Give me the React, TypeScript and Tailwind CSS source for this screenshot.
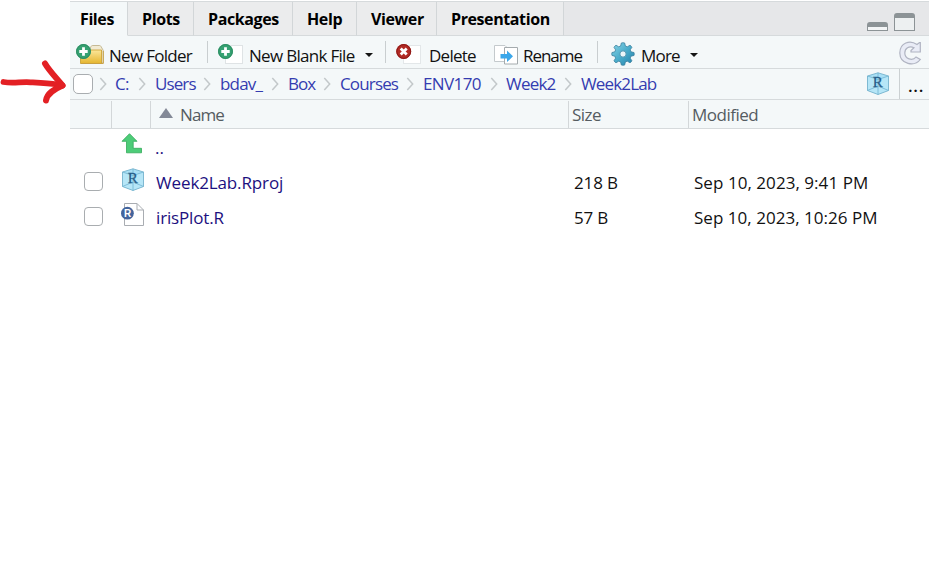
import type { ReactNode } from "react";

const tabs = [
  { name: "Files", box: "w-[58px] pl-[10px] bg-[#f4f8f9] border-b-[#f4f8f9]" },
  { name: "Plots", box: "w-[66px] pl-[14px] bg-[#ebeced] border-b-[#d6dadc]" },
  { name: "Packages", box: "w-[99px] pl-[14px] bg-[#ebeced] border-b-[#d6dadc]" },
  { name: "Help", box: "w-[64px] pl-[14px] bg-[#ebeced] border-b-[#d6dadc]" },
  { name: "Viewer", box: "w-[80px] pl-[14px] bg-[#ebeced] border-b-[#d6dadc]" },
  { name: "Presentation", box: "w-[127px] pl-[14px] bg-[#ebeced] border-b-[#d6dadc]" },
];

const crumbs = [
  { name: "C:", box: "w-[39px]", text: "tracking-[-0.6px]" },
  { name: "Users", box: "w-[65px]", text: "pl-px tracking-[-0.9px]" },
  { name: "bdav_", box: "w-[68px]", text: "pl-px tracking-[-0.8px]" },
  { name: "Box", box: "w-[52px]", text: "pl-px tracking-[-1px]" },
  { name: "Courses", box: "w-[83px]", text: "pl-px tracking-[-0.85px]" },
  { name: "ENV170", box: "w-[84px]", text: "pl-px tracking-[-0.6px]" },
  { name: "Week2", box: "w-[74px]", text: "tracking-[-0.8px]" },
  { name: "Week2Lab", box: "w-[100px]", text: "pl-px tracking-[-0.85px]" },
];

function Chevron() {
  return (
    <svg className="h-[14px] w-[9px] shrink-0" viewBox="0 0 9 14" fill="none" stroke="#c3c8ca" strokeWidth="1.5">
      <path d="M1.300 1l5.400 6-5.400 6" />
    </svg>
  );
}

function Plus() {
  return (
    <g>
      <circle cx="7.5" cy="7.5" r="7.4" fill="#35a172" />
      <circle cx="7.5" cy="7.5" r="6.9" fill="none" stroke="#2b8c60" strokeWidth="1" />
      <path d="M7.500 3.300v8.400M3.300 7.500h8.400" stroke="#fff" strokeWidth="2.800" />
    </g>
  );
}

function FolderIcon() {
  return (
    <svg className="h-[22px] w-[28px]" viewBox="0 0 28 22">
      <defs>
        <linearGradient id="folder" x2="0" y2="1">
          <stop stopColor="#fbe79b" />
          <stop offset="1" stopColor="#e5b52e" />
        </linearGradient>
      </defs>
      <path d="M13 7l2-4.500q.5-1 1.500-1h7q1 0 1.500 1l2.300 4V19H13z" fill="#f1ead2" stroke="#b9ab80" strokeWidth=".8" />
      <path d="M4.500 8.500h8.500l2-2.500h10.500v13.500h-21z" fill="url(#folder)" stroke="#c99c28" strokeWidth=".8" />
      <path d="M27.300 7v12.500H5" fill="none" stroke="#c79f42" strokeWidth=".9" />
      <Plus />
    </svg>
  );
}

function BlankFileIcon() {
  return (
    <svg className="h-[22px] w-[26px]" viewBox="0 0 26 22">
      <rect x="7.500" y="1.500" width="17" height="18" fill="#fff" stroke="#dfe3e5" />
      <Plus />
    </svg>
  );
}

function DeleteIcon() {
  return (
    <svg className="h-[22px] w-[26px]" viewBox="0 0 26 22">
      <rect x="7.500" y="1.500" width="17" height="18" fill="#fff" stroke="#e3e7e9" />
      <circle cx="7.700" cy="7.500" r="7.500" fill="#b12a24" />
      <circle cx="7.700" cy="7.500" r="6.900" fill="none" stroke="#8c1715" />
      <path d="M4.700 4.500l6 6M10.700 4.500l-6 6" stroke="#fff" strokeWidth="2.800" />
    </svg>
  );
}

function RenameIcon() {
  return (
    <svg className="h-[22px] w-[25px]" viewBox="0 0 25 22">
      <path d="M.5 1.500h10.500l3 3v13H.5z" fill="#fff" stroke="#c4cacd" />
      <path d="M10.500 3.500h13v16.500h-13z" fill="#fff" stroke="#a4abae" />
      <path d="M6.500 10H13V6.500l6 5.800-6 5.800v-3.600H6.500z" fill="#3ba7ea" />
    </svg>
  );
}

function GearIcon() {
  return (
    <svg className="h-[24px] w-[24px]" viewBox="0 0 25 25">
      <defs>
        <linearGradient id="gear" x2="1" y2="1">
          <stop stopColor="#8ad4e6" />
          <stop offset=".5" stopColor="#4badcb" />
          <stop offset="1" stopColor="#2480ab" />
        </linearGradient>
      </defs>
      <path fill="url(#gear)" stroke="#397f9d" strokeWidth=".8" strokeLinejoin="round" d="M10.800 1q1.700-.5 3.400 0l.8 3.200 2 .8 2.800-1.700q1.200.9 2 2.200L20 8.200l.8 2 3.200.8q.4 1.500 0 3l-3.200.8-.8 2 1.800 2.800q-.8 1.300-2 2.100L17 20l-2 .8-.8 3.200q-1.700.4-3.400 0l-.8-3.200L8 20l-2.800 1.700q-1.300-.8-2.100-2.100L4.800 16.800l-.8-2L1 14q-.4-1.500 0-3l3-.8.8-2L3.100 5.500q.8-1.300 2.100-2.200L8 5l2-.8z" />
      <circle cx="12.500" cy="12.500" r="3.300" fill="#edf6f9" stroke="#4590ae" />
    </svg>
  );
}

function ProjectIcon() {
  return (
    <svg className="h-[24px] w-[24px]" viewBox="0 0 24 24">
      <path d="M12 .8l10.500 3.200v14.500L12 22.500 1.500 18.500V4z" fill="#a9dff5" />
      <path d="M1.500 4L12 7l10.500-3v14.500L12 22.500 1.500 18.500z" fill="#b9e7f8" opacity=".8" />
      <path d="M1.500 4L12 7.500 22.500 4M12 .8v21.700M1.500 18.500L12 14l10.500 4.500" fill="none" stroke="#6fb3d0" strokeWidth=".8" />
      <path d="M12 .8l10.500 3.200v14.500L12 22.500 1.500 18.500V4z" fill="none" stroke="#76b3cd" strokeWidth=".9" />
      <text x="11.800" y="14.600" textAnchor="middle" fontFamily="Liberation Serif, serif" fontSize="15" fill="#275d88" stroke="#275d88" strokeWidth=".3">R</text>
    </svg>
  );
}

function ScriptIcon() {
  return (
    <svg className="h-[24px] w-[24px]" viewBox="0 0 24 24">
      <path d="M3.500.5h12.500l6.500 6.500v15.500h-19z" fill="#fff" stroke="#a9adb2" />
      <path d="M16 .5V7h6.500" fill="none" stroke="#a9adb2" />
      <circle cx="6.400" cy="10.200" r="6.400" fill="#43649c" />
      <text x="6.600" y="13.800" textAnchor="middle" fontFamily="Liberation Sans, sans-serif" fontSize="10" fontWeight="700" fill="#fff">R</text>
    </svg>
  );
}

function UpIcon() {
  return (
    <svg className="h-[21px] w-[22px]" viewBox="0 0 22 21">
      <path d="M8.500.7L16 8.300h-3.800v7h8.300v4.500H5.500V8.300H1z" fill="#4dcc78" stroke="#32aa59" strokeWidth=".8" />
    </svg>
  );
}

function Box() {
  return <span className="block h-5 w-5 shrink-0 rounded-[5px] border border-[#a9adb0] bg-white" />;
}

function RowBox() {
  return <span className="block h-[19px] w-[19px] shrink-0 rounded-[4px] border border-[#a9adb0] bg-white" />;
}

function Caret() {
  return <span className="mt-px border-x-[4.5px] border-t-[4.5px] border-x-transparent border-t-[#151515]" />;
}

function Tool({ box, iconBox, label, text, icon, caret }: { box: string; iconBox: string; label: string; text: string; icon: ReactNode; caret?: boolean }) {
  return (
    <div className={`flex shrink-0 items-start ${box}`}>
      <span className={`shrink-0 ${iconBox}`}>{icon}</span>
      <span className={`mt-[8px] shrink-0 leading-6 ${text}`}>{label}</span>
      {caret && <span className="flex h-[37px] items-center"><Caret /></span>}
    </div>
  );
}

function Separator() {
  return <span className="mt-[5px] h-[22px] w-px shrink-0 bg-[#c9ced0]" />;
}

function FileRow({ icon, name, nameText, size, sizeText, date, dateText }: { icon: ReactNode; name: string; nameText: string; size: string; sizeText: string; date: string; dateText: string }) {
  return (
    <div className="flex h-[35px] items-start">
      <span className="w-[51px] shrink-0 pt-[7px] pl-[14px]"><RowBox /></span>
      <span className="w-[35px] shrink-0 pt-[3px]">{icon}</span>
      <span className={`w-[418px] shrink-0 pt-[6px] leading-6 text-[#1c1080] ${nameText}`}>{name}</span>
      <span className={`w-[120px] shrink-0 pt-[6px] leading-6 ${sizeText}`}>{size}</span>
      <span className={`shrink-0 pt-[6px] leading-6 ${dateText}`}>{date}</span>
    </div>
  );
}

export default function App() {
  return (
    <div className="flex h-[565px] w-[929px] overflow-hidden bg-white font-['Open_Sans','Noto_Sans',sans-serif] text-[17px] whitespace-nowrap text-[#111]">
      <aside className="w-[70px] shrink-0 pt-[59px]">
        <svg className="h-[47px] w-[70px]" viewBox="0 0 70 47" fill="none" stroke="#e32024" strokeLinecap="round" strokeLinejoin="round">
          <path d="M3.500 23c10 2 17-.5 27 .3 12 .7 18 1 27 2.200" strokeWidth="5.800" />
          <path d="M45 4.500c4 7 11 14 17.500 22" strokeWidth="6" />
          <path d="M62.500 26.500c-9 4-15.500 8-16.500 15" strokeWidth="6" />
        </svg>
      </aside>
      <main className="flex w-[859px] shrink-0 flex-col">
        <nav className="mt-px flex h-[35px] border-t border-[#d6dadc] bg-[#e6e7e9]">
          {tabs.map((tab) => (
            <div key={tab.name} className={`shrink-0 border-r border-b border-r-[#d2d6d8] pt-[5px] text-[16px] leading-6 font-bold tracking-[-0.4px] text-black ${tab.box}`}>{tab.name}</div>
          ))}
          <div className="flex grow items-end justify-end gap-[6px] border-b border-[#d6dadc] pr-[14px] pb-[4px]">
            <span className="h-[9px] w-[21px] rounded-t-[3px] border border-t-[5px] border-[#8c9396] bg-[#f3f5f6]" />
            <span className="h-[18px] w-[21px] rounded-t-[3px] border-[1.5px] border-t-[5px] border-[#8c9396] bg-[#edf0f1]" />
          </div>
        </nav>
        <div className="flex h-[33px] items-start border-b border-[#d6dadc] bg-[#f4f8f9]">
          <Tool box="w-[137px] pl-[6px]" iconBox="w-[33px] pt-[8px]" label="New Folder" text="w-[90px] tracking-[-0.7px]" icon={<FolderIcon />} />
          <Separator />
          <Tool box="w-[177px] pl-[10px]" iconBox="w-[31px] pt-[8px]" label="New Blank File" text="w-[116px] tracking-[-0.7px]" icon={<BlankFileIcon />} caret />
          <Separator />
          <Tool box="w-[108px] pl-[10px]" iconBox="w-[33px] pt-[8px]" label="Delete" text="tracking-[-0.75px]" icon={<DeleteIcon />} />
          <Tool box="w-[103px]" iconBox="w-[29px] pt-[8px]" label="Rename" text="tracking-[-1.05px]" icon={<RenameIcon />} />
          <Separator />
          <Tool box="w-[103px] pl-[13px]" iconBox="w-[30px] pt-[6px]" label="More" text="w-[49px] tracking-[-0.8px]" icon={<GearIcon />} caret />
          <svg className="mt-[5px] mr-[7px] ml-auto h-[24px] w-[23px]" viewBox="0 0 23 24" fill="#e9ecf6" stroke="#b0b4c2" strokeWidth="1.200">
            <path d="M18 3.500l2.500-2 .8 0V11H12V9.500l3-2.800C10 4.500 5.800 7.500 5.800 12c0 6 7.700 8.500 11.200 4l4.300 2.500C15.500 26 1 23.500.8 12 .8 1.500 11-1.500 18 3.500z" />
          </svg>
        </div>
        <div className="flex h-[31px] items-center border-b border-[#d6dadc] bg-[#f4f8f9] pl-[3px] text-[#343cb0]">
          <Box />
          <span className="w-[6px] shrink-0" />
          {crumbs.map((crumb) => (
            <div key={crumb.name} className={`flex shrink-0 items-center gap-[7px] ${crumb.box}`}>
              <Chevron />
              <span className={`leading-6 ${crumb.text}`}>{crumb.name}</span>
            </div>
          ))}
          <div className="ml-auto flex h-full items-center">
            <ProjectIcon />
            <span className="ml-[9px] flex h-full w-[30px] items-center border-l border-[#cbd0d2] pt-[3px] pl-[8px] font-semibold tracking-[0.7px] text-[#111]">...</span>
          </div>
        </div>
        <header className="flex h-[29px] items-center border-b border-[#d6dadc] bg-[#f4f8f9] text-[#555c61]">
          <span className="mt-px h-[27px] w-[42px] shrink-0 border-r border-[#d3d7d9]" />
          <span className="mt-px h-[27px] w-[39px] shrink-0 border-r border-[#d3d7d9]" />
          <span className="mt-px flex h-[27px] w-[418px] shrink-0 items-center border-r border-[#d3d7d9] pl-[8px] tracking-[-0.9px]">
            <span className="mr-[7px] -mt-[3px] border-x-[7px] border-b-[10px] border-x-transparent border-b-[#838997]" />
            Name
          </span>
          <span className="mt-px flex h-[27px] w-[120px] shrink-0 items-center border-r border-[#d3d7d9] pl-[3px] tracking-[-0.5px]">Size</span>
          <span className="mt-px pl-[3px] tracking-[-0.5px]">Modified</span>
        </header>
        <section>
          <div className="flex h-[36px] items-start">
            <span className="w-[85px] pt-[4px] pl-[51px]"><UpIcon /></span>
            <span className="pt-[7px] leading-6 text-[#1c1080]">..</span>
          </div>
          <FileRow icon={<ProjectIcon />} name="Week2Lab.Rproj" nameText="tracking-[-0.13px]" size="218 B" sizeText="tracking-[-0.15px]" date="Sep 10, 2023, 9:41 PM" dateText="tracking-[0.05px]" />
          <FileRow icon={<ScriptIcon />} name="irisPlot.R" nameText="tracking-[-0.15px]" size="57 B" sizeText="tracking-[-0.2px]" date="Sep 10, 2023, 10:26 PM" dateText="tracking-[0.03px]" />
        </section>
      </main>
    </div>
  );
}
